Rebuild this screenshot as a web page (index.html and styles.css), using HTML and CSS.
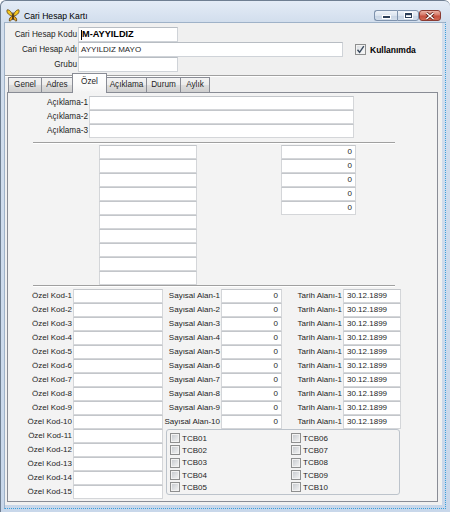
FILE: index.html
```html
<!DOCTYPE html>
<html>
<head>
<meta charset="utf-8">
<title>Cari Hesap Kartı</title>
<link rel="stylesheet" href="styles.css">
</head>
<body>
<div class="window">
  <div class="titlebar">
    <svg class="app-icon" width="14" height="13" viewBox="0 0 14 13">
      <path d="M6.8 6.5 C5.5 3 3.5 0.6 1.2 0.8 C0.3 2.6 1.4 5.8 6.6 7.2 Z" fill="#f6c81e" stroke="#5a3c0c" stroke-width="0.8"/>
      <path d="M7.2 6.5 C8.5 3 10.5 0.6 12.8 0.8 C13.7 2.6 12.6 5.8 7.4 7.2 Z" fill="#f6c81e" stroke="#5a3c0c" stroke-width="0.8"/>
      <path d="M6.7 7.3 C4.6 7.5 2.8 9.3 3.4 12 C5.2 12.2 6.3 10.3 6.9 8.6 Z" fill="#f2ab1c" stroke="#5a3c0c" stroke-width="0.8"/>
      <path d="M7.3 7.3 C9.4 7.5 11.2 9.3 10.6 12 C8.8 12.2 7.7 10.3 7.1 8.6 Z" fill="#f2ab1c" stroke="#5a3c0c" stroke-width="0.8"/>
      <path d="M7 3.5 L7 11" stroke="#3a2606" stroke-width="1.2"/>
    </svg>
    <span class="title">Cari Hesap Kartı</span>
    <div class="caption">
      <span class="cbtn cmin"><svg width="9" height="4" viewBox="0 0 9 4"><rect x="0.5" y="0.5" width="8" height="3" fill="#2c3f58" stroke="#ffffff" stroke-width="1"/></svg></span>
      <span class="cbtn cmax"><svg width="9" height="7" viewBox="0 0 9 7"><rect x="0.5" y="0.5" width="8" height="6" fill="#ffffff" stroke="#ffffff"/><rect x="1.5" y="1.5" width="6" height="4" fill="none" stroke="#2c3f58" stroke-width="1"/><rect x="2" y="2" width="5" height="1.2" fill="#2c3f58"/></svg></span>
      <span class="cbtn cclose"><svg width="10" height="8" viewBox="0 0 10 8"><path d="M1.5 1 L8.5 7 M8.5 1 L1.5 7" stroke="#5a1d16" stroke-width="3"/><path d="M1.5 1 L8.5 7 M8.5 1 L1.5 7" stroke="#ffffff" stroke-width="1.6"/></svg></span>
    </div>
  </div>
  <div class="glass">
    <div class="client">
      <div class="header">
        <div class="hrow">
          <span class="hlabel">Cari Hesap Kodu</span>
          <span class="field short code"><i class="caret"></i>M-AYYILDIZ</span>
        </div>
        <div class="hrow">
          <span class="hlabel">Cari Hesap Adı</span>
          <span class="field long">AYYILDIZ MAYO</span>
          <span class="usage">
            <span class="chk big"><svg width="9" height="9" viewBox="0 0 9 9"><path d="M1.5 4.8 L3.6 7.3 L7.8 1.2" fill="none" stroke="#3a4a5e" stroke-width="1.4"/></svg></span>
            <b class="usage-text">Kullanımda</b>
          </span>
        </div>
        <div class="hrow">
          <span class="hlabel">Grubu</span>
          <span class="field short"></span>
        </div>
      </div>

      <div class="tabs">
        <span class="tab t-genel">Genel</span>
        <span class="tab t-adres">Adres</span>
        <span class="tab t-ozel active">Özel</span>
        <span class="tab t-aciklama">Açıklama</span>
        <span class="tab t-durum">Durum</span>
        <span class="tab t-aylik">Aylık</span>
      </div>

      <div class="panel">
        <div class="arow"><span class="alabel">Açıklama-1</span><span class="fld afld"></span></div>
        <div class="arow"><span class="alabel">Açıklama-2</span><span class="fld afld"></span></div>
        <div class="arow"><span class="alabel">Açıklama-3</span><span class="fld afld"></span></div>

        <div class="sep"></div>

        <div class="mid">
          <div class="mcol1">
            <div class="fld"></div><div class="fld"></div><div class="fld"></div><div class="fld"></div><div class="fld"></div>
            <div class="fld"></div><div class="fld"></div><div class="fld"></div><div class="fld"></div><div class="fld"></div>
          </div>
          <div class="mcol2">
            <div class="fld num">0</div><div class="fld num">0</div><div class="fld num">0</div><div class="fld num">0</div><div class="fld num">0</div>
          </div>
        </div>

        <div class="sep sep2"></div>

        <div class="grid">
          <div class="group">
            <span class="cbi"><span class="chk"></span>TCB01</span>
            <span class="cbi"><span class="chk"></span>TCB02</span>
            <span class="cbi"><span class="chk"></span>TCB03</span>
            <span class="cbi"><span class="chk"></span>TCB04</span>
            <span class="cbi"><span class="chk"></span>TCB05</span>
            <span class="cbi"><span class="chk"></span>TCB06</span>
            <span class="cbi"><span class="chk"></span>TCB07</span>
            <span class="cbi"><span class="chk"></span>TCB08</span>
            <span class="cbi"><span class="chk"></span>TCB09</span>
            <span class="cbi"><span class="chk"></span>TCB10</span>
          </div>

          <span class="lbl">Özel Kod-1</span><span class="fld"></span><span class="lbl">Sayısal Alan-1</span><span class="fld num">0</span><span class="lbl">Tarih Alanı-1</span><span class="fld date">30.12.1899</span>
          <span class="lbl">Özel Kod-2</span><span class="fld"></span><span class="lbl">Sayısal Alan-2</span><span class="fld num">0</span><span class="lbl">Tarih Alanı-1</span><span class="fld date">30.12.1899</span>
          <span class="lbl">Özel Kod-3</span><span class="fld"></span><span class="lbl">Sayısal Alan-3</span><span class="fld num">0</span><span class="lbl">Tarih Alanı-1</span><span class="fld date">30.12.1899</span>
          <span class="lbl">Özel Kod-4</span><span class="fld"></span><span class="lbl">Sayısal Alan-4</span><span class="fld num">0</span><span class="lbl">Tarih Alanı-1</span><span class="fld date">30.12.1899</span>
          <span class="lbl">Özel Kod-5</span><span class="fld"></span><span class="lbl">Sayısal Alan-5</span><span class="fld num">0</span><span class="lbl">Tarih Alanı-1</span><span class="fld date">30.12.1899</span>
          <span class="lbl">Özel Kod-6</span><span class="fld"></span><span class="lbl">Sayısal Alan-6</span><span class="fld num">0</span><span class="lbl">Tarih Alanı-1</span><span class="fld date">30.12.1899</span>
          <span class="lbl">Özel Kod-7</span><span class="fld"></span><span class="lbl">Sayısal Alan-7</span><span class="fld num">0</span><span class="lbl">Tarih Alanı-1</span><span class="fld date">30.12.1899</span>
          <span class="lbl">Özel Kod-8</span><span class="fld"></span><span class="lbl">Sayısal Alan-8</span><span class="fld num">0</span><span class="lbl">Tarih Alanı-1</span><span class="fld date">30.12.1899</span>
          <span class="lbl">Özel Kod-9</span><span class="fld"></span><span class="lbl">Sayısal Alan-9</span><span class="fld num">0</span><span class="lbl">Tarih Alanı-1</span><span class="fld date">30.12.1899</span>
          <span class="lbl">Özel Kod-10</span><span class="fld"></span><span class="lbl">Sayısal Alan-10</span><span class="fld num">0</span><span class="lbl">Tarih Alanı-1</span><span class="fld date">30.12.1899</span>
          <span class="lbl">Özel Kod-11</span><span class="fld"></span>
          <span class="lbl">Özel Kod-12</span><span class="fld"></span>
          <span class="lbl">Özel Kod-13</span><span class="fld"></span>
          <span class="lbl">Özel Kod-14</span><span class="fld"></span>
          <span class="lbl">Özel Kod-15</span><span class="fld"></span>
        </div>
      </div>
    </div>
  </div>
</div>
</body>
</html>
```

FILE: styles.css
```css
* { box-sizing: border-box; }

html, body {
  margin: 0;
  padding: 0;
}

body {
  width: 450px;
  height: 512px;
  overflow: hidden;
  background: #ffffff;
  font-family: "Liberation Sans", Arial, sans-serif;
  font-size: 8.2px;
  color: #1e1e1e;
}

.window {
  width: 450px;
  height: 512px;
  border: 1px solid #6f7f92;
  border-right: none;
  border-bottom: none;
  border-radius: 6px 6px 0 0;
  background: linear-gradient(to bottom, #e4ecf6 0, #d2deed 21px, #c8d7ea 100%);
  padding: 0 4px 3px 3px;
  display: flex;
  flex-direction: column;
}

/* ---------- title bar ---------- */
.titlebar {
  height: 21px;
  flex: none;
  display: flex;
  align-items: flex-start;
}

.app-icon {
  margin: 8px 0 0 2px;
  flex: none;
}

.title {
  margin: 10px 0 0 4px;
  font-size: 8.6px;
  line-height: 10px;
  color: #000;
}

.caption {
  margin: 9px 5px 0 auto;
  display: flex;
}

.cbtn {
  height: 11px;
  display: flex;
  align-items: center;
  justify-content: center;
  border: 1px solid #7f93ad;
  background: linear-gradient(to bottom, #eef3f9 0%, #dbe4ef 50%, #c7d4e4 51%, #d3deeb 100%);
}

.cmin {
  width: 23px;
  border-radius: 3px 0 0 3px;
  border-right: none;
  align-items: flex-end;
  padding-bottom: 1px;
}

.cmax {
  width: 22px;
  border-radius: 0 3px 3px 0;
}

.cclose {
  width: 22px;
  border-color: #8b3b32;
  border-radius: 3px;
  background: linear-gradient(to bottom, #eab2a5 0%, #d77a69 45%, #c5503f 55%, #d06a55 100%);
}

/* ---------- frame ---------- */
.glass {
  flex: 1;
  border-left: 1px solid #9fb2c8;
  border-top: 1px solid #9fb2c8;
  border-right: 1px dotted #3a9fdc;
  border-bottom: 1px dotted #3a9fdc;
  padding: 0 3px 3px 0;
}

.client {
  height: 100%;
  background: #f0f0f0;
  display: flex;
  flex-direction: column;
}

/* ---------- header ---------- */
.header {
  height: 53px;
  flex: none;
  padding-top: 4px;
  border-bottom: 1px solid #a0a0a0;
  box-shadow: 0 1px 0 #ffffff;
}

.hrow {
  height: 15px;
  display: flex;
  align-items: stretch;
}

.hlabel {
  width: 73px;
  text-align: right;
  padding-right: 1px;
  line-height: 15px;
  white-space: nowrap;
}

.field {
  height: 15px;
  background: #ffffff;
  border: 1px solid #cfd3d8;
  border-top-color: #b8bdc3;
  padding-left: 2px;
  line-height: 13px;
  font-size: 8px;
  white-space: nowrap;
  display: flex;
  align-items: center;
}

.short { width: 100px; }
.long { width: 265px; }

.code {
  font-weight: bold;
  font-size: 9.2px;
  color: #000;
}

.caret {
  display: inline-block;
  width: 1px;
  height: 10px;
  background: #000;
}

.usage {
  display: flex;
  align-items: center;
  margin-left: 12px;
}

.usage-text {
  margin-left: 2px;
  font-size: 8.5px;
  color: #000;
}

/* ---------- checkboxes ---------- */
.chk {
  width: 10px;
  height: 10px;
  flex: none;
  border: 1px solid #8e8f8f;
  background: linear-gradient(135deg, #c3c6cb 0%, #dfe1e3 55%, #f6f6f6 100%);
  box-shadow: inset 0 0 0 1px #f2f2f2;
  margin-right: 2px;
}

.chk.big {
  width: 11px;
  height: 11px;
  display: flex;
  align-items: center;
  justify-content: center;
  background: linear-gradient(135deg, #d6d9dd 0%, #eceef0 55%, #fafafa 100%);
}

/* ---------- tabs ---------- */
.tabs {
  height: 15px;
  flex: none;
  margin: 1px 0 0 3px;
  display: flex;
  align-items: flex-end;
}

.tab {
  height: 15px;
  margin-left: -1px;
  border: 1px solid #898c95;
  border-bottom: none;
  background: linear-gradient(to bottom, #f3f3f3 0%, #ebebeb 50%, #dddddd 51%, #cfcfcf 100%);
  text-align: center;
  line-height: 14px;
  white-space: nowrap;
}

.t-genel { width: 34px; margin-left: 0; }
.t-adres { width: 32px; }
.t-ozel { width: 35px; }
.t-aciklama { width: 41px; }
.t-durum { width: 35px; }
.t-aylik { width: 30px; }

.tab.active {
  height: 20px;
  margin-bottom: -1px;
  position: relative;
  z-index: 1;
  background: linear-gradient(to bottom, #ffffff 0%, #fafafa 60%, #f3f3f3 100%);
  line-height: 15px;
}

/* ---------- panel ---------- */
.panel {
  flex: 1;
  margin: 0 4px 3px 2px;
  border: 1px solid #898c95;
  background: #f3f3f3;
  padding-top: 3px;
}

.fld {
  display: block;
  height: 14px;
  background: #ffffff;
  border: 1px solid #d4d6d9;
  border-top-color: #c3c6ca;
  line-height: 12px;
  padding: 0 2px;
  white-space: nowrap;
  font-size: 8px;
}

.num {
  text-align: right;
  padding-right: 3px;
}

.date {
  padding-left: 3px;
}

.arow {
  height: 14px;
  display: flex;
}

.alabel {
  width: 81px;
  text-align: right;
  padding-right: 1px;
  line-height: 14px;
  white-space: nowrap;
}

.afld { width: 265px; }

.sep {
  width: 362px;
  height: 2px;
  margin: 4px 0 1px 25px;
  border-top: 1px solid #a0a0a0;
  border-bottom: 1px solid #ffffff;
}

.sep2 {
  margin: 0 0 2px 25px;
}

.mid {
  display: flex;
  align-items: flex-start;
  margin-left: 91px;
  height: 140px;
}

.mcol1 { width: 98px; }
.mcol2 { width: 75px; margin-left: 84px; }

.grid {
  display: grid;
  grid-template-columns: 65px 90px 58px 61px 61px 58px;
  grid-auto-rows: 14px;
}

.lbl {
  text-align: right;
  padding-right: 1px;
  line-height: 14px;
  white-space: nowrap;
  font-size: 8px;
}

.group {
  grid-column: 3 / 7;
  grid-row: 11 / 16;
  margin: 0 1px 4px 3px;
  border: 1px solid #bcc3cb;
  border-radius: 3px;
  padding: 2px 0 0 3px;
  display: grid;
  grid-template-columns: 121px 1fr;
  grid-template-rows: repeat(5, 12.3px);
  grid-auto-flow: column;
}

.cbi {
  display: flex;
  align-items: center;
  font-size: 8px;
  white-space: nowrap;
}
```
